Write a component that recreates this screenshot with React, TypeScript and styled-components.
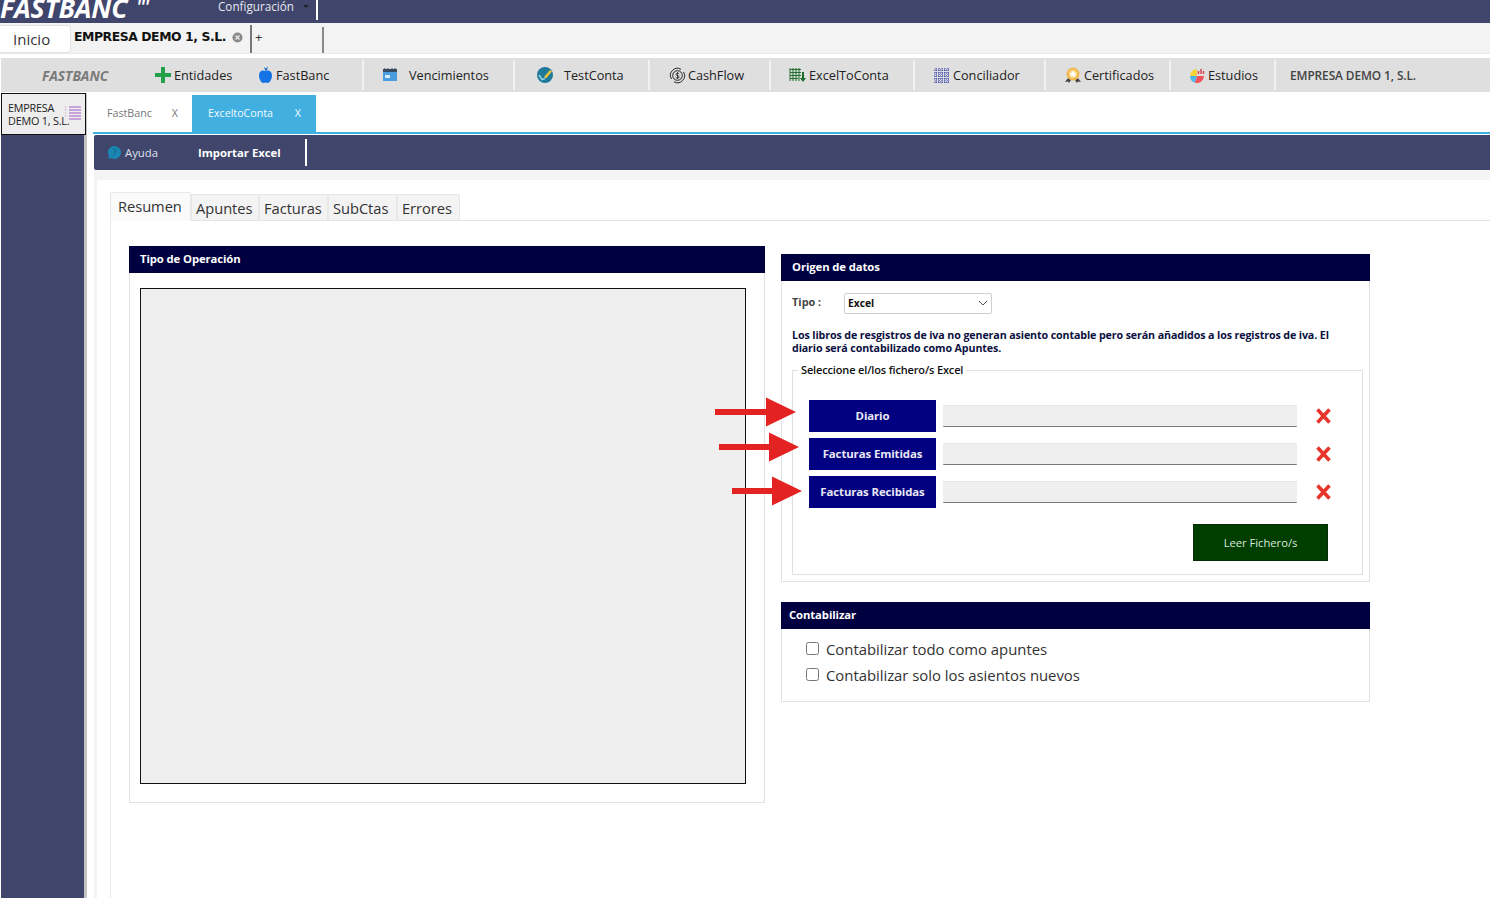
import React from "react";
import styled, { createGlobalStyle } from "styled-components";

const Global = createGlobalStyle`
  html, body { margin: 0; padding: 0; background: #fff; }
  body { font-family: "Open Sans", "Noto Sans", sans-serif; color: #222; overflow: hidden; }
  * { box-sizing: border-box; }
`;

const Page = styled.div`
  width: 1490px; height: 898px; display: flex; flex-direction: column; overflow: hidden; background: #fff;
`;
const TopBar = styled.header`
  height: 23px; flex: none; background: #3f456b; display: flex; align-items: flex-start; overflow: hidden;
`;
const Logo = styled.div`
  width: 218px; height: 23px; color: #fff; font: italic 700 26.7px/16px "Open Sans", sans-serif; letter-spacing: -0.2px; white-space: nowrap;
  sup { font-size: 17px; font-weight: 700; line-height: 0; vertical-align: 5px; margin-left: 9px; }
`;
const ConfigMenu = styled.div`
  width: 100px; height: 20px; display: flex; align-items: flex-start; color: #e6e8f0; font-size: 11.7px; line-height: 13px; border-right: 2px solid #fff;
  span { flex: 1; }
  i { width: 0; height: 0; border: 3px solid transparent; border-top-color: #222; margin: 5px 7px 0 0; }
`;
const SessionTabs = styled.div`
  height: 31px; flex: none; background: #f3f3f3; display: flex; align-items: stretch; padding-top: 2px; border-bottom: 1px solid #e9e9e9;
`;
const HomeTab = styled.div`
  width: 71px; height: 28px; background: #fff; border: 1px solid #e3e3e3; border-left: 0; border-radius: 0 4px 4px 0; padding: 3px 0 0 13px; font-size: 15px; line-height: 20px; color: #333;
`;
const CompanyTab = styled.div`
  width: 181px; display: flex; align-items: flex-start; gap: 6px; padding: 3px 0 0 3px; border-right: 2px solid #777; font: 700 12.4px/17px "DejaVu Sans", sans-serif; letter-spacing: -0.43px; color: #111; white-space: nowrap;
  svg { margin-top: 4px; flex: none; }
`;
const AddTab = styled.div`
  width: 72px; margin-top: 2px; border-right: 2px solid #888; padding: 0 0 0 3px; font-size: 13px; line-height: 20px; color: #333;
`;
const Toolbar = styled.nav`
  height: 34px; flex: none; margin: 4px 0 0 1px; background: #dfdfdf; display: flex; align-items: center; font-size: 12.7px; color: #222; white-space: nowrap;
`;
const Brand = styled.div`
  width: 149px; padding-left: 41px; color: #7a7a7a; font-weight: 700; font-style: italic; font-size: 13.7px;
`;
const ToolItem = styled.div<{ $w: number; $gap?: number; $pad?: number; $sep?: boolean }>`
  width: ${(p) => p.$w}px; height: 30px; display: flex; align-items: center; gap: ${(p) => p.$gap ?? 2}px; padding-left: ${(p) => p.$pad ?? 0}px;
  border-right: ${(p) => (p.$sep ? "2px solid #f2f2f2" : "0")}; font-weight: 500;
`;
const CompanyName = styled.div`
  padding-left: 14px; color: #444; font-weight: 600; font-size: 11.9px; letter-spacing: -0.1px;
`;
const Body = styled.div`
  flex: 1; display: flex; min-height: 0; padding-top: 1px;
`;
const Sidebar = styled.aside`
  width: 90px; flex: none; padding-left: 1px; background: linear-gradient(90deg, #fff 0, #fff 1px, #3f456b 1px, #3f456b 84px, #c4c4c4 84px, #c4c4c4 87px, #fff 87px);
`;
const SideCard = styled.div`
  position: relative; width: 85px; height: 42px; background: #ededed; border: 1px solid #111; padding: 7px 0 0 6px; font-size: 10.8px; line-height: 13px; color: #222; white-space: pre-line; letter-spacing: -0.2px;
  svg { position: absolute; left: 63px; top: 12px; }
`;
const Main = styled.main`
  flex: 1; min-width: 0; display: flex; flex-direction: column; padding-left: 3px;
`;
const ModuleTabs = styled.div`
  height: 41px; flex: none; padding: 2px 0 0 0; display: flex; border-bottom: 2px solid #3fb0e0;
`;
const ModuleTab = styled.div<{ $active?: boolean }>`
  width: ${(p) => (p.$active ? 124 : 99)}px; height: 100%; display: flex; align-items: center; justify-content: space-between;
  padding: 0 ${(p) => (p.$active ? 15 : 14)}px 2px ${(p) => (p.$active ? 16 : 14)}px;
  font-size: 10.7px; background: ${(p) => (p.$active ? "#41afe0" : "#fff")}; color: ${(p) => (p.$active ? "#f2faff" : "#777")};
`;
const ActionBar = styled.div`
  height: 35px; flex: none; margin: 1px 0 0 1px; background: #3f456b; border-radius: 2px 0 0 2px; display: flex; align-items: center; color: #fff; font-size: 11.3px;
`;
const HelpLink = styled.div`
  width: 104px; display: flex; align-items: center; gap: 3px; padding-left: 13px; color: #dfe2ee; white-space: nowrap;
`;
const ImportButton = styled.div`
  width: 109px; height: 27px; display: flex; align-items: center; border-right: 2px solid #fff; font-weight: 700; white-space: nowrap;
`;
const Canvas = styled.div`
  flex: 1; min-height: 0; background: #f4f4f4; padding: 10px 0 0 3px; margin-left: 1px;
`;
const Sheet = styled.div`
  height: 100%; background: #fff; padding: 12px 0 0 13px;
`;
const ViewTabs = styled.div`
  height: 29px; display: flex; align-items: flex-end; border-bottom: 1px solid #e4e4e4; color: #333;
`;
const ViewTab = styled.div<{ $active?: boolean; $w: number }>`
  width: ${(p) => p.$w}px; height: ${(p) => (p.$active ? 29 : 27)}px; margin-bottom: -1px; padding-left: ${(p) => (p.$active ? 7 : 4)}px;
  background: ${(p) => (p.$active ? "#fafafa" : "#f3f3f3")}; border: 1px solid #e8e8e8; border-bottom: ${(p) => (p.$active ? "1px solid #fafafa" : "1px solid #e4e4e4")};
  font-size: 14.7px; line-height: 26px; letter-spacing: -0.05px; white-space: nowrap;
`;
const Pane = styled.div`
  height: 700px; border-left: 1px solid #e8e8e8; display: flex; align-items: flex-start; gap: 16px; padding-left: 18px;
`;
const Panel = styled.section<{ $w: number; $h: number; $mt?: number }>`
  width: ${(p) => p.$w}px; height: ${(p) => p.$h}px; flex: none; margin-top: ${(p) => p.$mt ?? 0}px; border: 1px solid #e1e1e1; border-top: 0;
`;
const PanelHead = styled.h2<{ $pl?: number }>`
  margin: 0 -1px; height: 27px; background: #000040; color: #fff; font-size: 11.3px; font-weight: 700; line-height: 26px; padding-left: ${(p) => p.$pl ?? 11}px; letter-spacing: -0.1px;
`;
const PreviewBox = styled.div`
  width: 606px; height: 496px; margin: 15px 0 0 10px; background: #efefef; border: 1px solid #111;
`;
const RightColumn = styled.div`
  width: 589px; flex: none; margin-top: 33px; display: flex; flex-direction: column; gap: 20px;
`;
const TypeRow = styled.div`
  display: flex; align-items: center; height: 22px; margin: 11px 0 0 10px; font-size: 10.9px; font-weight: 700; color: #444;
  label { width: 52px; margin-top: -3px; }
`;
const SelectBox = styled.div`
  width: 148px; height: 21px; background: #fff; border: 1px solid #cfcfcf; border-radius: 2px; display: flex; align-items: center; justify-content: space-between; padding: 0 3px 0 3px; color: #111; font-size: 10.3px;
`;
const Notice = styled.p`
  margin: 15px 14px 0 10px; font-size: 10.7px; line-height: 13px; font-weight: 700; color: #0b1040; letter-spacing: -0.12px;
`;
const FileSet = styled.fieldset`
  position: relative; margin: 15px 6px 0 10px; padding: 21px 16px 0; height: 205px; border: 1px solid #dfdfdf; min-width: 0;
  legend { position: absolute; top: -8px; left: 5px; padding: 0 3px; background: #fff; font-size: 11px; font-weight: 600; line-height: 14px; color: #111; letter-spacing: -0.15px; white-space: nowrap; }
`;
const FileRows = styled.div`
  margin-top: 8px; display: flex; flex-direction: column; gap: 6px;
`;
const FileRow = styled.div`
  display: flex; align-items: center; height: 32px;
`;
const FileButton = styled.div`
  width: 127px; height: 32px; padding-bottom: 2px; background: #000080; color: #e8e8f4; display: flex; align-items: center; justify-content: center; font-size: 11.4px; font-weight: 700; letter-spacing: -0.1px; white-space: nowrap;
`;
const FileInput = styled.div`
  width: 354px; height: 22px; margin: 0 0 0 7px; background: #efefef; border-top: 1px solid #e6e6e6; border-bottom: 1px solid #777; border-radius: 1px;
`;
const Remove = styled.div`
  margin-left: 18px; display: flex; align-items: center;
`;
const ArrowMark = styled.svg<{ $left: number; $top: number }>`
  position: absolute; left: ${(p) => p.$left}px; top: ${(p) => p.$top}px;
`;
const ReadRow = styled.div`
  display: flex; justify-content: flex-end; margin: 16px 18px 0 0;
`;
const ReadButton = styled.div`
  width: 135px; height: 37px; background: #003e00; border: 1px solid #062b06; color: #dfe8df; display: flex; align-items: center; justify-content: center; font-size: 11.2px;
`;
const CheckList = styled.div`
  padding: 9px 0 0 24px; display: flex; flex-direction: column; gap: 4px;
`;
const CheckLine = styled.label`
  display: flex; align-items: center; height: 22px; gap: 7px; font-size: 14.9px; color: #333; letter-spacing: -0.03px; white-space: nowrap;
`;
const Box = styled.span`
  width: 13px; height: 13px; margin-top: -1px; border: 1px solid #777; border-radius: 2.5px; background: #fff; flex: none;
`;

const Plus = () => (
  <svg width="16" height="16" viewBox="0 0 16 16"><path d="M6 0h4v6h6v4h-6v6H6v-6H0V6h6z" fill="#22a04a" /></svg>
);
const AppleIcon = () => (
  <svg width="15" height="18" viewBox="0 0 15 18"><path d="M7.500 5C5 3.600 1 4.500 1 9.500 1 13.500 3.500 17 5.500 17c1 0 1.300-.5 2-.5s1 .5 2 .5c2 0 4.500-3.500 4.500-7.500C14 4.500 10 3.600 7.500 5z" fill="#1673e6" /><path d="M7.500 5 6 1l2 1.500L10 .5 9 4z" fill="#1268c9" /></svg>
);
const Calendar = () => (
  <svg width="16" height="14" viewBox="0 0 16 14"><rect x="1" y="1" width="14" height="12" fill="#4b9be0" /><rect x="1" y="1" width="14" height="3" fill="#3b4a63" /><path d="M3 0v2M6 0v2M10 0v2M13 0v2" stroke="#3b4a63" /><rect x="3" y="7" width="5" height="3" fill="#d6ecff" /></svg>
);
const TestIcon = () => (
  <svg width="18" height="18" viewBox="0 0 18 18"><circle cx="9" cy="9" r="8" fill="#1f7a99" /><path d="M8 11l6-7 2 1.500-6 7z" fill="#e8c33c" /><path d="M3 9l3 4.500 3-1" fill="none" stroke="#8fd0e0" strokeWidth="1.600" /></svg>
);
const CashIcon = () => (
  <svg width="17" height="17" viewBox="0 0 17 17" fill="none" stroke="#222"><circle cx="8.500" cy="8.500" r="4.800" /><path d="M2.500 12A7 7 0 0 1 12 2.300M14.500 5A7 7 0 0 1 5 14.700" /><path d="M10.200 6.800c-.8-.9-3.300-.8-3.300.7 0 1.700 3.400.8 3.400 2.500 0 1.300-2.600 1.400-3.600.4M8.500 5v7" strokeWidth=".8" /></svg>
);
const SheetIcon = () => (
  <svg width="17" height="16" viewBox="0 0 17 16"><rect x="1" y="1" width="11" height="13" fill="#cfe3cf" /><path d="M1 1v13M4 1v13M7 1v13M10 1v13M1 2.500h11M1 5.500h11M1 8.500h11M1 11.500h8" fill="none" stroke="#2b6b35" /><path d="M13 5v6h-2l3 4 3-4h-2V5z" fill="#1d6a30" /></svg>
);
const DotsIcon = () => (
  <svg width="15" height="15" viewBox="0 0 15 15" stroke="#1f2a9c" strokeDasharray="1 1"><path d="M2 0v15M5 0v15M8 0v15M11 0v15M14 0v15M0 2h15M0 5h15M0 8h15M0 11h15M0 14h15" fill="none" /></svg>
);
const MedalIcon = () => (
  <svg width="16" height="17" viewBox="0 0 16 17"><path d="M3 11l-3 4 3-.5 1 1.500 2-3zM13 11l3 4-3-.5-1 1.500-2-3z" fill="#444" /><circle cx="8" cy="7" r="6.500" fill="#f2b84e" /><circle cx="8" cy="7" r="4.200" fill="#f9d88f" /><path d="M8 3.500l1.100 2.200 2.400.3-1.700 1.700.4 2.400L8 9l-2.200 1.100.4-2.400L4.500 6l2.400-.3z" fill="#fff" /></svg>
);
const PieIcon = () => (
  <svg width="16" height="15" viewBox="0 0 16 15"><path d="M8 1A7 7 0 0 0 1 8h7z" fill="#f6d33a" /><path d="M1 8a7 7 0 0 0 5 6.700L8 8z" fill="#4db8ec" /><path d="M8 8l-2 6.700A7 7 0 0 0 15 8z" fill="#f4505c" /><path d="M9.500 6V3M12 6V1M14.500 6V3" stroke="#d8404f" strokeWidth="1.500" /></svg>
);
const HelpBubble = () => (
  <svg width="15" height="15" viewBox="0 0 15 15"><path d="M7.500 1a6.500 6.500 0 1 1-3.500 12L1 14l1-3a6.500 6.500 0 0 1 5.500-10z" fill="#1a86b4" /><text x="7.500" y="11" fontSize="9" textAnchor="middle" fill="#0d5c80" fontFamily="Open Sans">?</text></svg>
);
const RedX = () => (
  <svg width="17" height="16" viewBox="0 0 17 16"><path d="M2.500 1.500l12 13M14.500 1.500l-12 13" stroke="#e8352c" strokeWidth="3.600" /></svg>
);
const ArrowShape = ({ left, top, len }: { left: number; top: number; len: number }) => (
  <ArrowMark $left={left} $top={top} width={len} height="30" viewBox={`0 0 ${len} 30`}>
    <path d={`M0 12h${len - 30}V0.500L${len} 15 ${len - 30} 29.500V18H0z`} fill="#e32322" />
  </ArrowMark>
);
const Close = () => (
  <svg width="11" height="11" viewBox="0 0 11 11"><circle cx="5.500" cy="5.500" r="5" fill="#8a8a8a" /><path d="M3.500 3.500l4 4M7.500 3.500l-4 4" stroke="#eee" strokeWidth="1.200" /></svg>
);
const ListIcon = () => (
  <svg width="17" height="15" viewBox="0 0 17 15" stroke="#a45bc9"><path d="M4 1h12M4 4h12M4 7h12M4 10h12M4 13h12" /><path d="M0 1h2M0 4h2M0 7h2M0 10h2" strokeDasharray="1 1" opacity=".6" /></svg>
);

export default function App() {
  return (
    <Page>
      <Global />
      <TopBar>
        <Logo>FASTBANC<sup>'''</sup></Logo>
        <ConfigMenu><span>Configuración</span><i /></ConfigMenu>
      </TopBar>
      <SessionTabs>
        <HomeTab>Inicio</HomeTab>
        <CompanyTab>EMPRESA DEMO 1, S.L.<Close /></CompanyTab>
        <AddTab>+</AddTab>
      </SessionTabs>
      <Toolbar>
        <Brand>FASTBANC</Brand>
        <ToolItem $w={108} $pad={5} $gap={3}><Plus />Entidades</ToolItem>
        <ToolItem $w={106} $gap={3} $sep><AppleIcon />FastBanc</ToolItem>
        <ToolItem $w={151} $pad={18} $gap={11} $sep><Calendar />Vencimientos</ToolItem>
        <ToolItem $w={135} $pad={21} $gap={10} $sep><TestIcon />TestConta</ToolItem>
        <ToolItem $w={121} $pad={19} $gap={2} $sep><CashIcon />CashFlow</ToolItem>
        <ToolItem $w={144} $pad={18} $gap={3} $sep><SheetIcon />ExcelToConta</ToolItem>
        <ToolItem $w={131} $pad={19} $gap={4} $sep><DotsIcon />Conciliador</ToolItem>
        <ToolItem $w={125} $pad={19} $gap={3} $sep><MedalIcon />Certificados</ToolItem>
        <ToolItem $w={105} $pad={18} $gap={3} $sep><PieIcon />Estudios</ToolItem>
        <CompanyName>EMPRESA DEMO 1, S.L.</CompanyName>
      </Toolbar>
      <Body>
        <Sidebar>
          <SideCard>{"EMPRESA\nDEMO 1, S.L."}<ListIcon /></SideCard>
        </Sidebar>
        <Main>
          <ModuleTabs>
            <ModuleTab><span>FastBanc</span><span>X</span></ModuleTab>
            <ModuleTab $active><span>ExceltoConta</span><span>X</span></ModuleTab>
          </ModuleTabs>
          <ActionBar>
            <HelpLink><HelpBubble />Ayuda</HelpLink>
            <ImportButton>Importar Excel</ImportButton>
          </ActionBar>
          <Canvas>
            <Sheet>
              <ViewTabs>
                <ViewTab $active $w={81}>Resumen</ViewTab>
                <ViewTab $w={68}>Apuntes</ViewTab>
                <ViewTab $w={69}>Facturas</ViewTab>
                <ViewTab $w={69}>SubCtas</ViewTab>
                <ViewTab $w={63}>Errores</ViewTab>
              </ViewTabs>
              <Pane>
                <Panel $w={636} $h={557} $mt={25}>
                  <PanelHead>Tipo de Operación</PanelHead>
                  <PreviewBox />
                </Panel>
                <RightColumn>
                  <Panel $w={589} $h={328}>
                    <PanelHead>Origen de datos</PanelHead>
                    <TypeRow>
                      <label>Tipo :</label>
                      <SelectBox>
                        <span>Excel</span>
                        <svg width="10" height="6" viewBox="0 0 10 6"><path d="M1 1l4 4 4-4" fill="none" stroke="#555" /></svg>
                      </SelectBox>
                    </TypeRow>
                    <Notice>Los libros de resgistros de iva no generan asiento contable pero serán añadidos a los registros de iva. El diario será contabilizado como Apuntes.</Notice>
                    <FileSet>
                      <legend>Seleccione el/los fichero/s Excel</legend>
                      <FileRows>
                        {["Diario", "Facturas Emitidas", "Facturas Recibidas"].map((name) => (
                          <FileRow key={name}>
                            <FileButton>{name}</FileButton>
                            <FileInput />
                            <Remove><RedX /></Remove>
                          </FileRow>
                        ))}
                      </FileRows>
                      <ArrowShape left={-78} top={26} len={81} />
                      <ArrowShape left={-74} top={61} len={80} />
                      <ArrowShape left={-61} top={105} len={70} />
                      <ReadRow><ReadButton>Leer Fichero/s</ReadButton></ReadRow>
                    </FileSet>
                  </Panel>
                  <Panel $w={589} $h={100}>
                    <PanelHead $pl={8}>Contabilizar</PanelHead>
                    <CheckList>
                      <CheckLine><Box />Contabilizar todo como apuntes</CheckLine>
                      <CheckLine><Box />Contabilizar solo los asientos nuevos</CheckLine>
                    </CheckList>
                  </Panel>
                </RightColumn>
              </Pane>
            </Sheet>
          </Canvas>
        </Main>
      </Body>
    </Page>
  );
}
